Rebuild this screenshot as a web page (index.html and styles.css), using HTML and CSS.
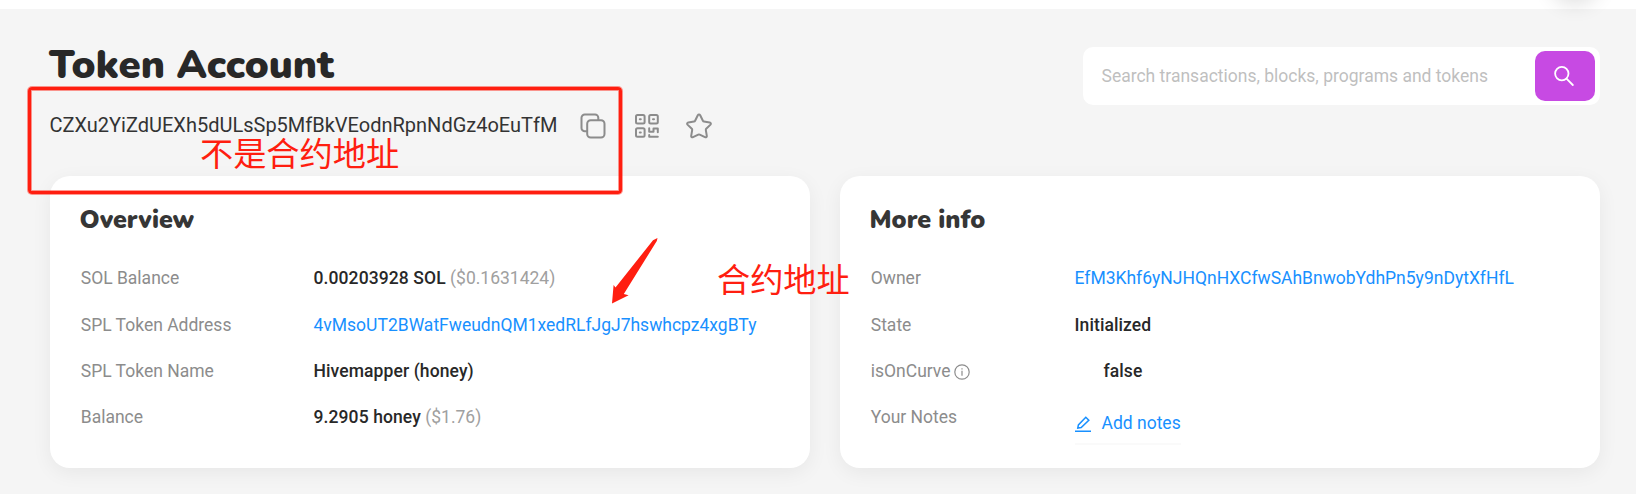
FILE: index.html
```html
<!DOCTYPE html>
<html lang="en">
<head>
<meta charset="utf-8">
<title>Token Account</title>
<link rel="stylesheet" href="styles.css">
</head>
<body>
<div class="topbar"><span class="topbar-bubble"></span></div>
<main class="page">
  <header class="head">
    <div class="head-main">
      <h1 class="title">Token Account</h1>
      <div class="address-row">
        <span class="address">CZXu2YiZdUEXh5dULsSp5MfBkVEodnRpnNdGz4oEuTfM</span>
        <svg class="icon icon-copy" viewBox="0 0 26 26"><rect x="7.2" y="7.2" width="17.300" height="17.300" rx="3.5"/><path d="M7 18.2H4.8A3.3 3.3 0 0 1 1.500 14.900V4.800A3.300 3.300 0 0 1 4.800 1.500H15A3.300 3.300 0 0 1 18.300 4.800V7"/></svg>
        <svg class="icon icon-qr" viewBox="0 0 24 24"><rect x="1" y="1" width="8.600" height="8.600" rx="1.500"/><rect x="14.200" y="1" width="8.600" height="8.600" rx="1.500"/><rect x="1" y="14.200" width="8.600" height="8.600" rx="1.500"/><path d="M4.800 5.300H5.800M18 5.300H19M4.800 18.500H5.800M14.200 14.200V17.800H18.500V14.500H22.800V18.300M14.200 22.800V21M14.200 22.800H22.800"/></svg>
        <svg class="icon icon-star" viewBox="0 0 26 26"><path d="M13 1.500c.5 0 .9.300 1.200.800l2.700 5.500c.2.400.6.700 1 .7l5.800.9c1.100.2 1.500 1.400.8 2.200l-4.300 4.200c-.3.300-.4.700-.4 1.100l1 6c.2 1.100-.9 1.700-1.800 1.300l-5.300-2.600c-.4-.2-1-.2-1.400 0L7 24.200c-.9.400-2-.2-1.800-1.300l1-6c0-.4-.1-.8-.4-1.100L1.500 11.600c-.7-.8-.3-2 .8-2.200l5.800-.9c.4 0 .8-.3 1-.7l2.700-5.500c.3-.5.700-.8 1.200-.8z"/></svg>
      </div>
    </div>
    <div class="search">
      <span class="placeholder">Search transactions, blocks, programs and tokens</span>
      <span class="search-btn"><svg class="icon-search" viewBox="0 0 20 20"><circle cx="7.800" cy="7.600" r="6.700"/><path d="M12.500 12.700L18.800 19"/></svg></span>
    </div>
  </header>
  <section class="cards">
    <div class="card">
      <h2 class="card-title">Overview</h2>
      <dl class="rows rows-overview">
        <dt>SOL Balance</dt><dd><b>0.00203928 SOL</b> <span class="usd">($0.1631424)</span></dd>
        <dt>SPL Token Address</dt><dd><a>4vMsoUT2BWatFweudnQM1xedRLfJgJ7hswhcpz4xgBTy</a></dd>
        <dt>SPL Token Name</dt><dd><b>Hivemapper (honey)</b></dd>
        <dt>Balance</dt><dd><b>9.2905 honey</b> <span class="usd">($1.76)</span></dd>
      </dl>
    </div>
    <div class="card">
      <h2 class="card-title">More info</h2>
      <dl class="rows rows-info">
        <dt>Owner</dt><dd><a>EfM3Khf6yNJHQnHXCfwSAhBnwobYdhPn5y9nDytXfHfL</a></dd>
        <dt>State</dt><dd><b>Initialized</b></dd>
        <dt>isOnCurve <svg class="icon-info" viewBox="0 0 16 16"><circle cx="8" cy="8" r="7.200"/><path d="M8 6.800V11.800M8 4.200V5.400"/></svg></dt><dd class="curve"><b>false</b></dd>
        <dt>Your Notes</dt><dd class="notes"><a class="add-notes"><svg class="icon-edit" viewBox="0 0 16 16"><path d="M0 15.200H16M2.800 12L3.400 8.900L10.800 1.300L13.800 4.200L6.200 11.500Z"/></svg><span>Add notes</span></a></dd>
      </dl>
    </div>
  </section>
</main>
<div class="mark-box"></div>
<div class="mark-text mark-text-a">不是合约地址</div>
<div class="mark-text mark-text-b">合约地址</div>
<svg class="mark-arrow" viewBox="0 0 50 68"><path d="M48.500 1L47.800 4L14.800 57L19.600 58.300L3 66.600L4.600 48L6.500 50.600L44 3.200Z"/></svg>
</body>
</html>
```
FILE: styles.css
```css
* { box-sizing: border-box; }
body {
  margin: 0;
  width: 1636px;
  height: 494px;
  overflow: hidden;
  position: relative;
  background: #f5f5f5;
  font-family: Roboto, "Liberation Sans", sans-serif;
  color: #282828;
}
.topbar { height: 9px; background: #fff; position: relative; }
.topbar-bubble {
  position: absolute;
  left: 1550px;
  top: -53px;
  width: 50px;
  height: 50px;
  border-radius: 50%;
  box-shadow: 0 8px 20px rgba(0, 0, 0, 0.12);
}
.page { padding: 38px 36px 0 50px; }
.head { display: flex; justify-content: space-between; height: 129px; }
.title {
  margin: 0 0 0 -1px;
  height: 36px;
  line-height: 36px;
  font-family: Nunito, Lato, sans-serif;
  font-weight: 900;
  font-size: 40px;
  white-space: nowrap;
}
.address-row { display: flex; align-items: center; height: 36px; margin-top: 24px; padding-top: 2px; }
.address {
  width: 530px;
  margin: -2px 0 0 -0.5px;
  font-size: 20px;
  line-height: 30px;
  white-space: nowrap;
  color: #333;
}
.icon { fill: none; stroke: #8c8c8c; stroke-width: 2; stroke-linejoin: round; stroke-linecap: round; }
.icon-copy { width: 26px; height: 26px; }
.icon-qr { width: 24px; height: 24px; margin-left: 29px; }
.icon-star { width: 26px; height: 26px; margin-left: 27px; }
.search {
  display: flex;
  align-items: center;
  justify-content: space-between;
  width: 517px;
  height: 58px;
  padding: 0 5px 0 18.5px;
  background: #fff;
  border-radius: 10px;
}
.placeholder { font-size: 17.5px; color: #bfbfbf; white-space: nowrap; }
.search-btn {
  display: flex;
  align-items: center;
  justify-content: center;
  width: 60px;
  height: 50px;
  border-radius: 10px;
  background: #c74ae3;
}
.icon-search { width: 20px; height: 20px; margin-right: 2px; fill: none; stroke: #fff; stroke-width: 1.8; stroke-linecap: round; }
.cards { display: flex; gap: 30px; }
.card {
  width: 760px;
  height: 292px;
  padding: 30px 30px 0;
  background: #fff;
  border-radius: 20px;
  box-shadow: 0 5px 20px rgba(0, 0, 0, 0.06);
}
.card-title {
  margin: 0 0 19px -0.5px;
  height: 30px;
  line-height: 28px;
  font-family: Nunito, Lato, sans-serif;
  font-weight: 900;
  font-size: 25px;
  color: #363636;
}
.rows {
  display: grid;
  grid-template-rows: 47px 46px 46px 46px;
  margin: 0;
  padding-left: 0.75px;
  font-size: 17.5px;
  line-height: 47px;
  white-space: nowrap;
}
.rows-overview { grid-template-columns: 232.75px 1fr; }
.rows-info { grid-template-columns: 203.75px 1fr; }
.rows dt { color: #8c8c8c; }
.rows dd { margin: 0; }
.rows b { font-weight: 500; letter-spacing: 0.1px; }
.rows a { color: #1890ff; }
.usd { color: #a0a0a0; }
.rows .curve { padding-left: 29px; }
.icon-info { width: 16px; height: 16px; vertical-align: -2.5px; margin-left: -0.5px; fill: none; stroke: #8c8c8c; stroke-width: 1.2; }
.add-notes {
  display: inline-flex;
  align-items: center;
  gap: 11px;
  height: 44px;
  margin-top: 7px;
  padding-top: 3px;
  border-bottom: 2px solid #fafafa;
}
.icon-edit { width: 16px; height: 16px; fill: none; stroke: #1890ff; stroke-width: 1.5; }
.mark-box {
  position: absolute;
  left: 28px;
  top: 87px;
  width: 594px;
  height: 107px;
  border: 3px solid #ff1e10;
  border-radius: 4px;
  box-shadow: 0 0 0 1px rgba(255, 30, 16, 0.45), inset 0 0 0 1px rgba(255, 30, 16, 0.45);
}
.mark-text {
  position: absolute;
  font-family: "Noto Sans CJK SC", sans-serif;
  font-size: 33.2px;
  line-height: 40px;
  color: #ff1e10;
  white-space: nowrap;
}
.mark-text-a { left: 200px; top: 132px; }
.mark-text-b { left: 717px; top: 258px; }
.mark-arrow { position: absolute; left: 609px; top: 237px; width: 50px; height: 68px; fill: #ff1e10; }
```
